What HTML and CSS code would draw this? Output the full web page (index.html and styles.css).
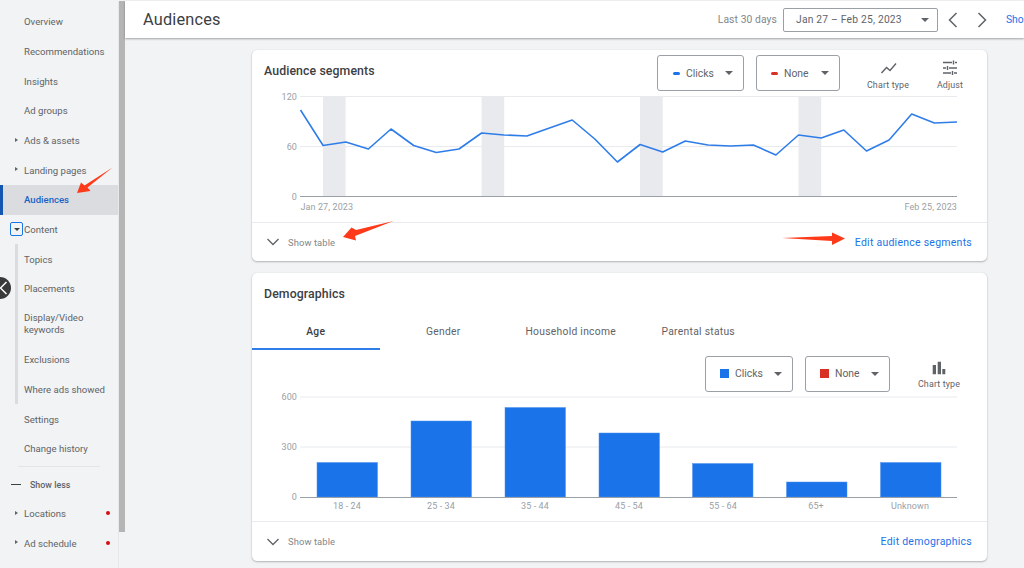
FILE: index.html
```html
<!DOCTYPE html>
<html lang="en">
<head>
<meta charset="utf-8">
<title>Audiences</title>
<link rel="stylesheet" href="styles.css">
</head>
<body>
<div class="page">
  <nav class="sidebar">
    <div class="item">Overview</div>
    <div class="item">Recommendations</div>
    <div class="item">Insights</div>
    <div class="item">Ad groups</div>
    <div class="item caret">Ads &amp; assets</div>
    <div class="item caret">Landing pages</div>
    <div class="item active">Audiences</div>
    <div class="item">
      <span class="toggle"><span class="toggle-tri"></span></span>Content
    </div>
    <div class="group">
      <div class="item">Topics</div>
      <div class="item">Placements</div>
      <div class="item tall">Display/Video<br>keywords</div>
      <div class="item">Exclusions</div>
      <div class="item">Where ads showed</div>
    </div>
    <div class="item">Settings</div>
    <div class="item">Change history</div>
    <div class="divider"></div>
    <div class="showless"><span class="dash"></span>Show less</div>
    <div class="item caret dot">Locations</div>
    <div class="item caret dot">Ad schedule</div>
  </nav>
  <div class="scrolltrack"><div class="scrollthumb"></div></div>
  <div class="main">
    <header class="topbar">
      <h1>Audiences</h1>
      <div class="range">
        <span class="range-label">Last 30 days</span>
        <div class="datebox"><span>Jan 27 – Feb 25, 2023</span><i class="tri"></i></div>
        <svg class="chev chev-prev" width="24" height="24" viewBox="0 0 24 24"><path d="M15.500 5 8.500 12l7 7" /></svg>
        <svg class="chev chev-next" width="24" height="24" viewBox="0 0 24 24"><path d="M8.500 5l7 7-7 7" /></svg>
        <a class="show">Sho</a>
      </div>
    </header>
    <div class="content">
      <section class="card first">
        <div class="seg-head">
          <h2>Audience segments</h2>
          <div class="controls">
            <div class="select s-clicks"><i class="dash-mark blue"></i><span>Clicks</span><i class="tri"></i></div>
            <div class="select s-none"><i class="dash-mark red"></i><span>None</span><i class="tri"></i></div>
            <div class="tool t-chart">
              <svg width="20" height="20" viewBox="0 0 20 20"><path d="M3.500 15 8.500 9.500l3.500 3L18 5.500" /></svg>
              <span>Chart type</span>
            </div>
            <div class="tool t-adjust">
              <svg width="20" height="20" viewBox="0 0 20 20"><path d="M3 4.500h9M15 4.500h2M13.500 2.500v4M3 10h3M9 10h8M7.500 8v4M3 15h8M14 15h3M12.500 13v4" /></svg>
              <span>Adjust</span>
            </div>
          </div>
        </div>
        <svg class="chart line-chart" width="735" height="132" viewBox="252 90 735 132">
          <g class="shade">
            <rect x="323" y="97" width="22.600" height="99"/>
            <rect x="481.600" y="97" width="22.600" height="99"/>
            <rect x="640" y="97" width="22.700" height="99"/>
            <rect x="798.500" y="97" width="22.700" height="99"/>
          </g>
          <path class="grid" d="M300 96.500H957M300 146.500H957"/>
          <path class="axis" d="M300 196.500H957"/>
          <polyline class="series" points="300.500,110 323.100,145.500 345.800,142 368.400,149 391,129 413.700,145.500 436.300,152.500 459,149 481.600,133 504.200,135 526.900,136 549.500,128 572.200,120 594.800,139 617.400,162 640.100,144.500 662.700,152 685.300,141 708,145 730.600,146 753.300,145 775.900,155 798.500,135 821.200,138 843.800,130 866.500,151 889.100,140 911.700,114 934.400,123 957,122"/>
          <g class="labels">
            <text x="297" y="100" text-anchor="end">120</text>
            <text x="297" y="150" text-anchor="end">60</text>
            <text x="297" y="200" text-anchor="end">0</text>
            <text x="300.500" y="210">Jan 27, 2023</text>
            <text x="957" y="210" text-anchor="end">Feb 25, 2023</text>
          </g>
        </svg>
        <div class="card-foot">
          <span class="showtable"><svg width="14" height="14" viewBox="0 0 14 14"><path d="M1.500 4 7 9.500 12.500 4"/></svg>Show table</span>
          <a class="edit">Edit audience segments</a>
        </div>
      </section>
      <section class="card second">
        <h2 class="demo-title">Demographics</h2>
        <div class="tabs">
          <div class="tab on">Age</div>
          <div class="tab">Gender</div>
          <div class="tab">Household income</div>
          <div class="tab">Parental status</div>
        </div>
        <div class="demo-controls">
          <div class="select s-clicks2"><i class="sq blue"></i><span>Clicks</span><i class="tri"></i></div>
          <div class="select s-none2"><i class="sq red"></i><span>None</span><i class="tri"></i></div>
          <div class="tool t-chart2">
            <svg width="20" height="20" viewBox="0 0 20 20"><path class="bars" d="M3.700 8H7v9.300H3.700zM8.700 4.700H12v12.600H8.700zM13.300 12H16.300v5.300H13.300z"/></svg>
            <span>Chart type</span>
          </div>
        </div>
        <svg class="chart bar-chart" width="735" height="129" viewBox="252 392 735 129">
          <path class="grid" d="M300 397H957M300 447H957"/>
          <g class="bar">
            <rect x="317" y="462.500" width="60.500" height="34.500"/>
            <rect x="411" y="421" width="60.500" height="76"/>
            <rect x="505" y="407.500" width="60.500" height="89.500"/>
            <rect x="599" y="433" width="60.500" height="64"/>
            <rect x="692.500" y="463.500" width="60.500" height="33.500"/>
            <rect x="786.500" y="482" width="60.500" height="15"/>
            <rect x="880.500" y="462.500" width="60.500" height="34.500"/>
          </g>
          <path class="axis" d="M300 497.500H957"/>
          <g class="labels">
            <text x="297" y="400" text-anchor="end">600</text>
            <text x="297" y="450" text-anchor="end">300</text>
            <text x="297" y="500" text-anchor="end">0</text>
            <g text-anchor="middle">
              <text x="347" y="509">18 - 24</text>
              <text x="441" y="509">25 - 34</text>
              <text x="535" y="509">35 - 44</text>
              <text x="629" y="509">45 - 54</text>
              <text x="723" y="509">55 - 64</text>
              <text x="816" y="509">65+</text>
              <text x="910" y="509">Unknown</text>
            </g>
          </g>
        </svg>
        <div class="card-foot foot2">
          <span class="showtable"><svg width="14" height="14" viewBox="0 0 14 14"><path d="M1.500 4 7 9.500 12.500 4"/></svg>Show table</span>
          <a class="edit">Edit demographics</a>
        </div>
      </section>
    </div>
  </div>
  <div class="collapse"><svg width="12" height="22" viewBox="0 0 12 22"><path d="M7.500 5 1.500 11l6 6"/></svg></div>
  <svg class="arrows" width="1024" height="568" viewBox="0 0 1024 568">
    <path d="M112.500 167.500 87.500 187.500 90.500 191 77 193 81 182.500 84.500 185.500Z"/>
    <path d="M393.500 221 356 230 351.500 227.500 343 237 356 240.500 355 236Z"/>
    <path d="M782 238 832 236 832 232.500 845 238.500 832 245 832 241Z"/>
  </svg>
</div>
</body>
</html>
```
FILE: styles.css
```css
* { box-sizing: border-box; }
html, body { margin: 0; padding: 0; }
body {
  width: 1024px;
  height: 568px;
  overflow: hidden;
  background: #f1f3f4;
  font-family: Roboto, "Liberation Sans", sans-serif;
  color: #5f6368;
}
.page {
  position: relative;
  display: flex;
  width: 1024px;
  height: 568px;
  padding-top: 1px;
}
.sidebar {
  width: 119px;
  flex: none;
  padding-top: 6px;
  border-right: 1px solid #e6e8ea;
  font-size: 9.600px;
}
.item {
  position: relative;
  height: 29.670px;
  padding-left: 24px;
  display: flex;
  align-items: center;
  white-space: nowrap;
}
.item.tall { height: 41.500px; line-height: 12px; display: block; padding-top: 8.500px; }
.caret::before {
  content: "";
  position: absolute;
  left: 15px;
  top: 12px;
  border-left: 3px solid #5f6368;
  border-top: 2.500px solid transparent;
  border-bottom: 2.500px solid transparent;
}
.dot::after {
  content: "";
  position: absolute;
  left: 105.500px;
  top: 12.500px;
  width: 4px;
  height: 4px;
  border-radius: 50%;
  background: #d50f0f;
}
.active {
  background: #dadce0;
  color: #1a62c5;
  font-weight: 500;
  border-left: 3px solid #1557b0;
  padding-left: 21px;
}
.toggle {
  position: absolute;
  left: 10px;
  top: 7.500px;
  width: 13px;
  height: 14px;
  border: 1.300px solid #1a73e8;
  border-radius: 2px;
  display: flex;
  align-items: center;
  justify-content: center;
}
.toggle-tri {
  border-top: 3px solid #3c4043;
  border-left: 3px solid transparent;
  border-right: 3px solid transparent;
}
.group { position: relative; }
.group::before {
  content: "";
  position: absolute;
  left: 15px;
  top: 0;
  bottom: 0;
  width: 3px;
  background: #dadce0;
}
.divider {
  height: 1px;
  margin: 2.500px 18px 0 18px;
  background: #e3e5e8;
}
.showless {
  height: 28px;
  margin-top: 3.500px;
  display: flex;
  align-items: center;
  font-size: 8.900px;
  font-weight: 500;
  color: #5f6368;
}
.dash {
  width: 10px;
  height: 1.300px;
  margin: 0 9px 0 11px;
  background: #3c4043;
}
.scrolltrack { width: 6px; flex: none; height: 100%; }
.scrollthumb { width: 6px; height: 531px; background: #b5b5b5; }
.main { flex: 1; min-width: 0; display: flex; flex-direction: column; }
.topbar {
  height: 37px;
  background: #fff;
  box-shadow: 0 1px 2px rgba(60,64,67,.45);
  display: flex;
  align-items: center;
  justify-content: space-between;
  padding-left: 18px;
  white-space: nowrap;
  position: relative;
}
h1 {
  margin: 0;
  font-size: 16.300px;
  font-weight: 400;
  color: #3c4043;
  letter-spacing: .2px;
}
.range { display: flex; align-items: center; font-size: 10.300px; }
.range-label { color: #80868b; margin-right: 6px; letter-spacing: .1px; }
.datebox {
  width: 155px;
  height: 24px;
  border: 1px solid #9aa0a6;
  border-radius: 2px;
  display: flex;
  align-items: center;
  justify-content: space-between;
  padding: 0 8.500px 0 12px;
  color: #5f6368;
  letter-spacing: .2px;
}
.tri {
  display: inline-block;
  width: 0;
  height: 0;
  border-top: 4px solid #5f6368;
  border-left: 4px solid transparent;
  border-right: 4px solid transparent;
}
.chev { fill: none; stroke: #5f6368; stroke-width: 1.500; width: 24px; height: 24px; flex: none; }
.chev-prev { margin-left: 3px; }
.chev-next { margin-left: 5px; margin-right: 12px; }
.show { color: #1a73e8; flex: none; width: 18px; }
.content {
  flex: 1;
  padding: 12px 37px 0 127px;
  display: flex;
  flex-direction: column;
  gap: 12px;
}
.card {
  background: #fff;
  border-radius: 5px;
  box-shadow: 0 1px 2px rgba(60,64,67,.35), 0 0 1px rgba(60,64,67,.15);
  width: 735px;
  flex: none;
}
.first { height: 211px; }
.second { height: 288px; }
h2 { margin: 0; font-size: 12.300px; font-weight: 500; color: #3c4043; letter-spacing: .1px; }
.seg-head {
  height: 40px;
  position: relative;
  display: flex;
  padding-left: 12px;
  padding-top: 13.500px;
}
.controls { position: absolute; top: 0; left: 0; right: 0; }
.select {
  position: absolute;
  height: 36px;
  border: 1px solid #9aa0a6;
  border-radius: 3px;
  display: flex;
  align-items: center;
  font-size: 10.400px;
  color: #5f6368;
}
.select span { flex: 1; }
.select .tri { margin-left: 6px; }
.s-clicks { left: 405px; top: 5px; width: 87px; padding: 0 10.500px 0 15px; }
.s-none { left: 504px; top: 5px; width: 84px; padding: 0 10px 0 14px; }
.dash-mark { width: 7px; height: 3px; border-radius: 2px; margin-right: 6px; }
.blue { background: #1a73e8; }
.red { background: #d93025; }
.sq { width: 9px; height: 9px; margin-right: 6px; }
.tool {
  position: absolute;
  display: flex;
  flex-direction: column;
  align-items: center;
  font-size: 8.900px;
  color: #5f6368;
  width: 50px;
  letter-spacing: .15px;
}
.tool svg { fill: none; stroke: #5f6368; stroke-width: 1.400; }
.tool .bars { fill: #5f6368; stroke: none; }
.tool span { white-space: nowrap; margin-top: 2px; }
.t-chart { left: 611px; top: 8px; }
.t-adjust { left: 673px; top: 8px; }
.chart { display: block; }
.shade rect { fill: #e8eaed; }
.grid { stroke: #e8eaed; stroke-width: 1; fill: none; }
.axis { stroke: #9aa0a6; stroke-width: 1; fill: none; }
.series { fill: none; stroke: #2f7de9; stroke-width: 1.600; stroke-linejoin: round; }
.labels text { font-size: 9px; fill: #9aa0a6; letter-spacing: .1px; }
.bar rect { fill: #1a73e8; stroke: #4e92ee; stroke-width: .5; }
.card-foot {
  height: 39px;
  border-top: 1px solid #e8eaed;
  display: flex;
  align-items: center;
  justify-content: space-between;
  padding: 0 15px 0 14px;
}
.foot2 { height: 40px; border-top-width: 1.500px; }
.showtable { display: flex; align-items: center; font-size: 9.400px; color: #80868b; letter-spacing: .1px; }
.showtable svg { fill: none; stroke: #5f6368; stroke-width: 1.300; margin-right: 8px; }
.edit { color: #1a73e8; font-size: 10.500px; letter-spacing: .25px; }
.demo-title { padding: 13.500px 0 0 12px; height: 40px; }
.tabs { display: flex; height: 37px; }
.tab {
  width: 127.500px;
  height: 37px;
  font-size: 10.300px;
  color: #5f6368;
  display: flex;
  align-items: center;
  justify-content: center;
  letter-spacing: .28px;
}
.tab.on { color: #3c4043; font-weight: 500; border-bottom: 2px solid #2f7de9; padding-top: 2px; }
.demo-controls { position: relative; height: 42px; }
.s-clicks2 { left: 453px; top: 5.500px; width: 88px; padding: 0 10.500px 0 14px; }
.s-none2 { left: 553px; top: 5.500px; width: 85px; padding: 0 10.500px 0 14px; }
.t-chart2 { left: 662px; top: 7px; }
.collapse {
  position: absolute;
  left: -11px;
  top: 277px;
  width: 22px;
  height: 22px;
  border-radius: 50%;
  background: #3a3a3a;
  display: flex;
  justify-content: flex-end;
}
.collapse svg { fill: none; stroke: #fff; stroke-width: 1.500; }
.arrows { position: absolute; left: 0; top: 0; pointer-events: none; }
.arrows path { fill: #ff3a1a; }
```
